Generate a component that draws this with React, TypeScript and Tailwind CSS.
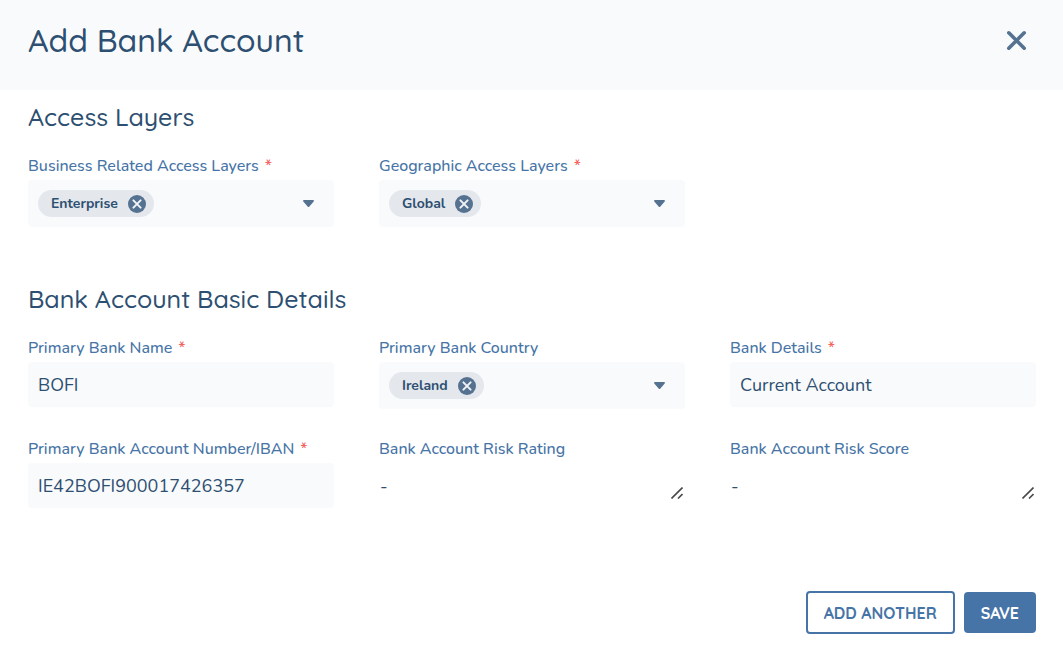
import { useState, type ReactNode } from 'react';

const labelFont = "font-['Nunito','Lato',sans-serif]";
const headingFont = "font-['Quicksand','Lato',sans-serif]";

function Label({ id, text, required }: { id: string; text: string; required?: boolean }) {
  return (
    <label htmlFor={id} className="mb-1 block whitespace-nowrap text-base leading-5 font-medium text-[#4674a6]">
      {text}
      {required && <span className="ml-1.5 text-[#f5635f]">*</span>}
    </label>
  );
}

function TextField({ id, label, value, required }: { id: string; label: string; value: string; required?: boolean }) {
  return (
    <div>
      <Label id={id} text={label} required={required} />
      <input
        id={id}
        type="text"
        defaultValue={value}
        required={required}
        className="block h-[45px] w-full rounded bg-[#f9fafc] px-2.5 text-lg text-[#2d4f71] outline-none"
      />
    </div>
  );
}

function NoteField({ id, label }: { id: string; label: string }) {
  return (
    <div>
      <Label id={id} text={label} />
      <div className="relative">
        <textarea
          id={id}
          defaultValue="-"
          rows={1}
          className="block h-[39px] w-full resize-none bg-white px-px pt-[9px] text-lg leading-7 text-[#2d4f71] outline-none"
        />
        <svg viewBox="0 0 12 12" className="pointer-events-none absolute right-0.5 bottom-[3px] size-3" stroke="#4a4a4a" strokeWidth="1.6">
          <path d="M.5 11.5l11-11M7 11.5l4.5-4.5" />
        </svg>
      </div>
    </div>
  );
}

function ChipSelect({ id, label, initial, options, required }: {
  id: string;
  label: string;
  initial: string[];
  options: string[];
  required?: boolean;
}) {
  const [chosen, setChosen] = useState(initial);

  return (
    <div>
      <Label id={id} text={label} required={required} />
      <div className="flex h-[47px] items-center rounded bg-[#f9fafc] pr-5 pl-2.5">
        {chosen.map((name) => (
          <span key={name} className="flex h-[27px] items-center gap-2.5 rounded-full bg-[#e4e7ec] pr-2 pl-[13px] text-sm font-bold text-[#2d4f71]">
            {name}
            <button type="button" aria-label={`Remove ${name}`} onClick={() => setChosen(chosen.filter((c) => c !== name))}>
              <svg viewBox="0 0 18 18" className="block size-[18px]">
                <circle cx="9" cy="9" r="9" fill="#557291" />
                <path d="M5.4 5.4l7.2 7.2M12.6 5.4l-7.2 7.2" stroke="#f1f3f6" strokeWidth="2" strokeLinecap="round" />
              </svg>
            </button>
          </span>
        ))}
        <select
          id={id}
          value=""
          onChange={(e) => setChosen([...chosen, e.target.value])}
          className="h-full min-w-0 flex-1 appearance-none bg-transparent text-sm text-[#2d4f71] outline-none"
        >
          <option value=""></option>
          {options.filter((o) => !chosen.includes(o)).map((o) => (
            <option key={o} value={o}>{o}</option>
          ))}
        </select>
        <svg viewBox="0 0 11 7" className="h-[7px] w-[11px] shrink-0" fill="#557291">
          <path d="M1 0h9c.9 0 1.3.9.7 1.5L6.4 6.4a1.2 1.2 0 0 1-1.8 0L.3 1.5C-.3.9.1 0 1 0z" />
        </svg>
      </div>
    </div>
  );
}

function Section({ title, children }: { title: string; children: ReactNode }) {
  return (
    <section>
      <h2 className={`${headingFont} mb-6 text-[25px] leading-[30px] font-medium text-[#2d4f71]`}>{title}</h2>
      <div className="grid grid-cols-3 gap-x-[45px] gap-y-[30px]">{children}</div>
    </section>
  );
}

export default function App() {
  return (
    <div className={`${labelFont} min-h-screen bg-white`}>
      {/* Header */}
      <header className="flex h-[90px] items-start justify-between bg-[#f9fafc] pt-5 pr-9 pl-7">
        <h1 className={`${headingFont} text-[32px] leading-10 font-medium text-[#2d4f71]`}>Add Bank Account</h1>
        <button type="button" aria-label="Close" className="flex h-10 items-center">
          <svg viewBox="0 0 21 21" className="size-[21px]" fill="none" stroke="#557291" strokeWidth="3.6" strokeLinecap="round">
            <path d="M2.8 2.8l15.4 15.4M18.2 2.8L2.8 18.2" />
          </svg>
        </button>
      </header>

      <form className="pt-3 pr-[27px] pl-7" onSubmit={(e) => e.preventDefault()}>
        <div className="space-y-[57px]">
          <Section title="Access Layers">
            <ChipSelect id="business" label="Business Related Access Layers" initial={['Enterprise']} options={['Enterprise', 'Retail', 'Corporate']} required />
            <ChipSelect id="geographic" label="Geographic Access Layers" initial={['Global']} options={['Global', 'Europe', 'Americas']} required />
          </Section>

          <Section title="Bank Account Basic Details">
            <TextField id="bank-name" label="Primary Bank Name" value="BOFI" required />
            <ChipSelect id="country" label="Primary Bank Country" initial={['Ireland']} options={['Ireland', 'France', 'Germany']} />
            <TextField id="details" label="Bank Details" value="Current Account" required />
            <TextField id="iban" label="Primary Bank Account Number/IBAN" value="IE42BOFI900017426357" required />
            <NoteField id="risk-rating" label="Bank Account Risk Rating" />
            <NoteField id="risk-score" label="Bank Account Risk Score" />
          </Section>
        </div>

        {/* Actions */}
        <div className={`${headingFont} mt-[83px] flex items-center justify-end gap-[9px] pb-4 text-base font-bold`}>
          <button type="button" className="h-[43px] rounded border-2 border-[#4674a6] px-4 text-[#4674a6]">
            ADD ANOTHER
          </button>
          <button type="submit" className="h-[41px] rounded bg-[#4674a6] px-[17px] text-white">
            SAVE
          </button>
        </div>
      </form>
    </div>
  );
}
